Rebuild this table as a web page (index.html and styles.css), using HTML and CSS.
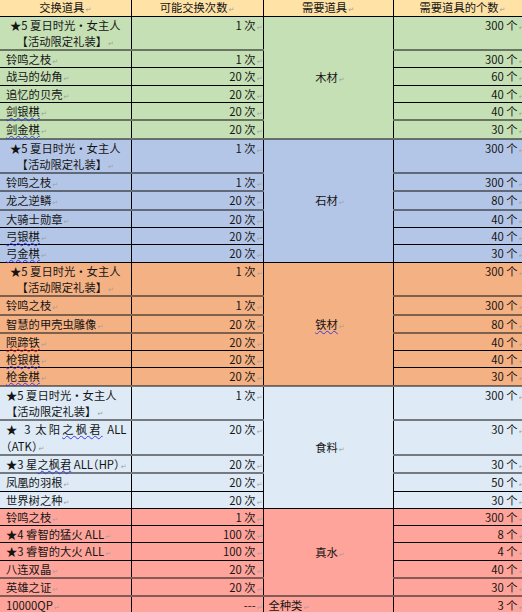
FILE: index.html
```html
<!DOCTYPE html>
<html lang="zh-CN">
<head>
<meta charset="utf-8">
<title>交换道具</title>
<link rel="stylesheet" href="styles.css">
</head>
<body>
<table class="sheet">
  <colgroup><col class="c1"><col class="c2"><col class="c3"><col class="c4"></colgroup>
  <thead>
    <tr><th>交换道具</th><th>可能交换次数</th><th>需要道具</th><th>需要道具的个数</th></tr>
  </thead>
  <tbody class="green">
    <tr><td class="item mid">★5 夏日时光・女主人<br>【活动限定礼装】</td><td class="num">1 次</td><td class="mat" rowspan="6">木材</td><td class="num cnt">300 个</td></tr>
    <tr class="gt"><td class="item">铃鸣之枝</td><td class="num">1 次</td><td class="num cnt">300 个</td></tr>
    <tr><td class="item">战马的幼角</td><td class="num">20 次</td><td class="num cnt">60 个</td></tr>
    <tr><td class="item">追忆的贝壳</td><td class="num">20 次</td><td class="num cnt">40 个</td></tr>
    <tr><td class="item"><span class="wb">剑银棋</span></td><td class="num">20 次</td><td class="num cnt">40 个</td></tr>
    <tr class="gt"><td class="item"><span class="wb">剑金棋</span></td><td class="num">20 次</td><td class="num cnt">30 个</td></tr>
  </tbody>
  <tbody class="blue">
    <tr class="gt"><td class="item mid">★5 夏日时光・女主人<br>【活动限定礼装】</td><td class="num">1 次</td><td class="mat" rowspan="6">石材</td><td class="num cnt">300 个</td></tr>
    <tr class="gt"><td class="item">铃鸣之枝</td><td class="num">1 次</td><td class="num cnt">300 个</td></tr>
    <tr class="gt"><td class="item">龙之逆鳞</td><td class="num">20 次</td><td class="num cnt">80 个</td></tr>
    <tr class="gt"><td class="item">大骑士勋章</td><td class="num">20 次</td><td class="num cnt">40 个</td></tr>
    <tr><td class="item"><span class="wb">弓银棋</span></td><td class="num">20 次</td><td class="num cnt">40 个</td></tr>
    <tr><td class="item"><span class="wb">弓金棋</span></td><td class="num">20 次</td><td class="num cnt">30 个</td></tr>
  </tbody>
  <tbody class="orange">
    <tr><td class="item mid">★5 夏日时光・女主人<br>【活动限定礼装】</td><td class="num">1 次</td><td class="mat" rowspan="6"><span class="wb">铁材</span></td><td class="num cnt">300 个</td></tr>
    <tr class="gt"><td class="item">铃鸣之枝</td><td class="num">1 次</td><td class="num cnt">300 个</td></tr>
    <tr class="gt"><td class="item">智慧的甲壳虫雕像</td><td class="num">20 次</td><td class="num cnt">80 个</td></tr>
    <tr class="gt"><td class="item"><span class="wr">陨蹄铁</span></td><td class="num">20 次</td><td class="num cnt">40 个</td></tr>
    <tr><td class="item"><span class="wb">枪银棋</span></td><td class="num">20 次</td><td class="num cnt">40 个</td></tr>
    <tr><td class="item"><span class="wb">枪金棋</span></td><td class="num">20 次</td><td class="num cnt">30 个</td></tr>
  </tbody>
  <tbody class="pale">
    <tr class="gt"><td class="item">★5 夏日时光・女主人<br>【活动限定礼装】</td><td class="num">1 次</td><td class="mat" rowspan="5">食料</td><td class="num cnt">300 个</td></tr>
    <tr class="gt"><td class="item just">★ 3 太阳<span class="wb">之枫君</span> ALL <span class="halt">（ATK）</span></td><td class="num">20 次</td><td class="num cnt">30 个</td></tr>
    <tr class="gt"><td class="item tight">★3 星<span class="wb">之枫君</span> ALL<span class="halt">（HP）</span></td><td class="num">20 次</td><td class="num cnt">30 个</td></tr>
    <tr class="gt"><td class="item">凤凰的羽根</td><td class="num">20 次</td><td class="num cnt">50 个</td></tr>
    <tr><td class="item">世界树之种</td><td class="num">20 次</td><td class="num cnt">30 个</td></tr>
  </tbody>
  <tbody class="red">
    <tr><td class="item">铃鸣之枝</td><td class="num">1 次</td><td class="mat" rowspan="5">真水</td><td class="num cnt">300 个</td></tr>
    <tr><td class="item">★4 睿智的猛火 ALL</td><td class="num">100 次</td><td class="num cnt">8 个</td></tr>
    <tr><td class="item">★3 睿智的大火 ALL</td><td class="num">100 次</td><td class="num cnt">4 个</td></tr>
    <tr><td class="item">八连双晶</td><td class="num">20 次</td><td class="num cnt">40 个</td></tr>
    <tr class="gt"><td class="item">英雄之证</td><td class="num">20 次</td><td class="num cnt">30 个</td></tr>
    <tr class="gt"><td class="item">10000QP</td><td class="num">---</td><td class="kind">全种类</td><td class="num cnt">3 个</td></tr>
  </tbody>
</table>
</body>
</html>
```

FILE: styles.css
```css
html, body {
  margin: 0;
  padding: 0;
  background: #ffffff;
}

body {
  font-family: "Noto Sans CJK SC", "Liberation Sans", sans-serif;
  font-size: 11.3px;
  color: #141414;
  overflow: hidden;
}

.sheet {
  border-collapse: collapse;
  table-layout: fixed;
  width: 532px;
}

.c1 { width: 131px; }
.c2 { width: 132px; }
.c3 { width: 130px; }
.c4 { width: 139px; }

.sheet th,
.sheet td {
  border: 1px solid #000;
  padding: 0 4px 0 6px;
  line-height: 16.3px;
  vertical-align: top;
  font-weight: normal;
  text-align: left;
}

.sheet th:first-child,
.sheet td:first-child {
  border-left: none;
}

.sheet th {
  background: #fee2a6;
  border-top: none;
  text-align: center;
  line-height: 15.5px;
  padding: 0;
}

/* rows whose top rule renders as a soft double-pixel line */
.sheet tr.gt > td {
  border-top: 2px solid rgba(30, 30, 30, 0.55);
}

/* Word paragraph marks */
.sheet th::after,
.sheet td::after {
  content: "↵";
  font-family: "DejaVu Sans", sans-serif;
  font-size: 7px;
  line-height: 0;
  color: #a0a0a0;
  margin-left: 1px;
}

.green td { background: #c5e0b4; }
.blue td { background: #b4c6e7; }
.orange td { background: #f4b183; }
.pale td { background: #deebf7; }
.red td { background: #ffa49b; }

.sheet td.mid {
  text-align: center;
  padding-left: 3px;
  padding-right: 3px;
}

.sheet td.just {
  text-align: justify;
}

.sheet td.tight {
  white-space: nowrap;
  padding-right: 0;
}

.sheet td.num {
  text-align: right;
  padding-right: 0;
  white-space: nowrap;
}

.sheet td.num.cnt {
  padding-right: 7px;
}

.sheet td.mat {
  vertical-align: middle;
  text-align: center;
  padding: 0 0 0 4px;
}

.sheet td.kind {
  padding-left: 5px;
}

.halt {
  font-feature-settings: "halt";
}

.wb {
  text-decoration: underline wavy #3a3ae6;
  text-decoration-thickness: 1px;
  text-underline-offset: 1px;
}

.wr {
  text-decoration: underline wavy #e02020;
  text-decoration-thickness: 1px;
  text-underline-offset: 1px;
}
```
